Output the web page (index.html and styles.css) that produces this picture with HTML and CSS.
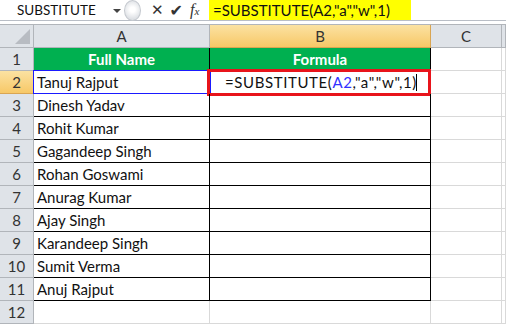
FILE: index.html
```html
<!DOCTYPE html>
<html lang="en">

<head>
    <meta charset="utf-8">
    <meta name="viewport" content="width=device-width, initial-scale=1.0">
    <title>SUBSTITUTE</title>
    <link rel="stylesheet" href="styles.css">
</head>

<body>
    <header class="formelbar">
        <div class="navnefelt">
            <span class="navn">SUBSTITUTE</span>
            <span class="pil"></span>
        </div>
        <div class="knapper">
            <span class="greb"></span>
            <span class="ikon kryds">&#x2715;</span>
            <span class="ikon flueben">&#x2714;</span>
            <span class="ikon fx">f<small>x</small></span>
        </div>
        <div class="formel">=SUBSTITUTE(A2,"a","w",1)</div>
        <div class="rest"></div>
    </header>
    <div class="mellemrum"></div>

    <main class="ark">
        <div class="hj hjorne"><span class="trekant"></span></div>
        <div class="hj kol">A</div>
        <div class="hj kol valgt">B</div>
        <div class="hj kol">C</div>
        <div class="hj kol tom"></div>

        <div class="hj rk">1</div>
        <div class="c tab titel">Full Name</div>
        <div class="c tab titel">Formula</div>
        <div class="c"></div>
        <div class="c"></div>

        <div class="hj rk valgt">2</div>
        <div class="c tab markeret">Tanuj Rajput<span class="markering"></span></div>
        <div class="c tab formelcelle">=SUBSTITUTE(<span class="ref">A2</span>,"a","w",1)<span class="cursor"></span><span class="rodboks"></span></div>
        <div class="c"></div>
        <div class="c"></div>

        <div class="hj rk">3</div>
        <div class="c tab">Dinesh Yadav</div>
        <div class="c tab"></div>
        <div class="c"></div>
        <div class="c"></div>

        <div class="hj rk">4</div>
        <div class="c tab">Rohit Kumar</div>
        <div class="c tab"></div>
        <div class="c"></div>
        <div class="c"></div>

        <div class="hj rk">5</div>
        <div class="c tab">Gagandeep Singh</div>
        <div class="c tab"></div>
        <div class="c"></div>
        <div class="c"></div>

        <div class="hj rk">6</div>
        <div class="c tab">Rohan Goswami</div>
        <div class="c tab"></div>
        <div class="c"></div>
        <div class="c"></div>

        <div class="hj rk">7</div>
        <div class="c tab">Anurag Kumar</div>
        <div class="c tab"></div>
        <div class="c"></div>
        <div class="c"></div>

        <div class="hj rk">8</div>
        <div class="c tab">Ajay Singh</div>
        <div class="c tab"></div>
        <div class="c"></div>
        <div class="c"></div>

        <div class="hj rk">9</div>
        <div class="c tab">Karandeep Singh</div>
        <div class="c tab"></div>
        <div class="c"></div>
        <div class="c"></div>

        <div class="hj rk">10</div>
        <div class="c tab">Sumit Verma</div>
        <div class="c tab"></div>
        <div class="c"></div>
        <div class="c"></div>

        <div class="hj rk">11</div>
        <div class="c tab">Anuj Rajput</div>
        <div class="c tab"></div>
        <div class="c"></div>
        <div class="c"></div>

        <div class="hj rk">12</div>
        <div class="c"></div>
        <div class="c"></div>
        <div class="c"></div>
        <div class="c"></div>
    </main>
</body>

</html>
```

FILE: styles.css
```css
body {
    margin: 0;
    font-family: Lato, "Liberation Sans", sans-serif;
    font-size: 15px;
    color: #111;
    background-color: white;
    overflow: hidden;
}

/* formel-linjen i toppen */
.formelbar {
    display: flex;
    height: 20px;
    border-bottom: 1px solid #b9bec6;
}

.navnefelt {
    width: 123px;
    display: flex;
    align-items: center;
    position: relative;
}

.navn {
    margin-left: 17px;
    font-size: 13.5px;
}

.pil {
    position: absolute;
    left: 113px;
    top: 9px;
    border-left: 4px solid transparent;
    border-right: 4px solid transparent;
    border-top: 4px solid #444;
}

.knapper {
    width: 86px;
    display: flex;
    align-items: center;
    position: relative;
}

.greb {
    width: 15px;
    height: 19px;
    margin-left: 1px;
    border-radius: 50%;
    border: 1px solid #c5c9cf;
    background: radial-gradient(circle at 50% 45%, #ffffff 20%, #dfe2e6 70%);
}

.ikon {
    color: #333;
    font-family: "DejaVu Sans", sans-serif;
}

.kryds {
    margin-left: 10px;
    font-size: 15px;
    font-weight: bold;
}

.flueben {
    margin-left: 6px;
    font-size: 16px;
}

.fx {
    margin-left: 7px;
    font-family: "Liberation Serif", serif;
    font-style: italic;
    font-size: 16px;
}

.fx small {
    font-size: 11px;
}

.formel {
    width: 202px;
    background-color: #ffff00;
    padding-left: 4px;
    box-sizing: border-box;
    line-height: 20px;
    white-space: nowrap;
}

.rest {
    flex: 1;
}

.mellemrum {
    height: 3px;
}

/* regnearket */
.ark {
    display: grid;
    grid-template-columns: 34px 176px 221px 71px 1fr;
    grid-template-rows: 23px;
    grid-auto-rows: 23px;
    border-top: 1px solid #b1b5ba;
}

.hj {
    background-color: #dfe3e8;
    border-right: 1px solid #b1b5ba;
    border-bottom: 1px solid #b1b5ba;
    color: #333;
    display: flex;
    align-items: center;
    justify-content: center;
}

.kol {
    height: 22px;
}

.hjorne {
    position: relative;
}

.trekant {
    position: absolute;
    right: 3px;
    bottom: 3px;
    border-left: 15px solid transparent;
    border-bottom: 15px solid #b8bcc2;
}

.valgt {
    background: linear-gradient(#fbe2a2, #f7c867);
    border-color: #d9a552;
}

.c {
    border-right: 1px solid #d9d9d9;
    border-bottom: 1px solid #d9d9d9;
    display: flex;
    align-items: center;
    padding-left: 3px;
    white-space: nowrap;
    position: relative;
}

.tab {
    border-right-color: #000;
    border-bottom-color: #000;
}

.titel {
    background-color: #00b050;
    color: white;
    font-weight: bold;
    justify-content: center;
    padding-left: 0;
}

.formelcelle {
    padding-left: 15px;
    letter-spacing: 0.6px;
}

.ref {
    color: #3232ff;
}

.cursor {
    position: absolute;
    left: 206px;
    top: 3px;
    width: 1px;
    height: 17px;
    background-color: #000;
}

.rodboks {
    position: absolute;
    left: -3px;
    top: -2px;
    width: 224px;
    height: 27px;
    border: 3px solid #e8141b;
    box-sizing: border-box;
}

.markering {
    position: absolute;
    left: -1px;
    top: -1px;
    right: -2px;
    bottom: -1px;
    border: 1px solid #1a1aff;
}
```
